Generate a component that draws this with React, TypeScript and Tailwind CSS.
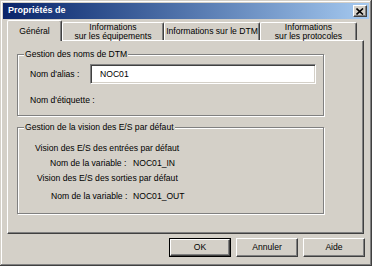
const font = "font-['Liberation_Sans',Arial,sans-serif]";

const raised =
  "border border-t-white border-l-white border-r-[#404040] border-b-[#404040] shadow-[inset_-1px_-1px_0_#808080]";

function GroupBox({ label, className, children }: { label: string; className?: string; children: React.ReactNode }) {
  return (
    <div
      className={`relative border border-[#808080] shadow-[inset_1px_1px_0_#fff,1px_1px_0_#fff] ${className ?? ""}`}
    >
      <span className="absolute -top-[7px] left-[6px] bg-[#d4d0c8] px-[1px] leading-[12px]">{label}</span>
      {children}
    </div>
  );
}

function Tab({ width, lines }: { width: string; lines: string[] }) {
  return (
    <div
      className={`${width} mt-[2px] h-[18px] rounded-t-[2px] border-t border-l border-r border-t-white border-l-white border-r-[#404040] shadow-[inset_-1px_0_0_#808080] flex flex-col items-center justify-center leading-[9px] text-center`}
    >
      {lines.map((l) => (
        <span key={l}>{l}</span>
      ))}
    </div>
  );
}

function Button({ label, isDefault }: { label: string; isDefault?: boolean }) {
  return (
    <div className={`w-[62px] h-[19px] ${isDefault ? "border border-black" : ""}`}>
      <div className={`w-full h-full flex items-center justify-center ${raised}`}>{label}</div>
    </div>
  );
}

export default function App() {
  return (
    <div
      className={`${font} w-[372px] h-[266px] bg-[#d4d0c8] text-black text-[8.6px] p-[3px] flex flex-col shadow-[inset_-1px_-1px_0_#404040,inset_1px_1px_0_#d4d0c8,inset_-2px_-2px_0_#808080,inset_2px_2px_0_#fff]`}
    >
      {/* title bar */}
      <div className="h-[16px] flex items-center justify-between bg-gradient-to-r from-[#0a246a] to-[#a6caf0] pl-[5px] pr-[2px]">
        <span className="text-white font-bold text-[9px]">Propriétés de</span>
        <div className={`w-[14px] h-[12px] bg-[#d4d0c8] flex items-center justify-center ${raised}`}>
          <svg width="8" height="7" viewBox="0 0 8 7">
            <path d="M0.5 0.5 L7 6.5 M7 0.5 L0.5 6.5" stroke="#000" strokeWidth="1.6" />
          </svg>
        </div>
      </div>

      {/* tabs */}
      <div className="relative z-10 mt-[1px] ml-[4px] h-[20px] flex items-start">
        <div className="w-[55px] h-[21px] bg-[#d4d0c8] rounded-t-[2px] border-t border-l border-r border-t-white border-l-white border-r-[#404040] shadow-[inset_-1px_0_0_#808080] flex items-center justify-center pt-[1px]">
          Général
        </div>
        <Tab width="w-[102px]" lines={["Informations", "sur les équipements"]} />
        <Tab width="w-[96px]" lines={["Informations sur le DTM"]} />
        <Tab width="w-[97px]" lines={["Informations", "sur les protocoles"]} />
      </div>

      {/* panel */}
      <div className={`ml-[4px] w-[357px] h-[194px] flex flex-col ${raised}`}>
        <GroupBox label="Gestion des noms de DTM" className="ml-[9px] mt-[13px] w-[307px] h-[62px]">
          <div className="mt-[9px] pl-[12px] h-[20px] flex items-center">
            <span className="w-[60px]">Nom d'alias :</span>
            <div className="w-[226px] h-[20px] bg-white flex items-center pl-[9px] border border-t-[#808080] border-l-[#808080] border-b-white border-r-white shadow-[inset_1px_1px_0_#404040,inset_-1px_-1px_0_#d4d0c8]">
              NOC01
            </div>
          </div>
          <div className="mt-[9px] pl-[12px] h-[14px] flex items-center">Nom d'étiquette :</div>
        </GroupBox>

        <GroupBox label="Gestion de la vision des E/S par défaut" className="ml-[9px] mt-[11px] w-[307px] h-[87px]">
          <div className="mt-[13px] pl-[17px] h-[14px] flex items-center">Vision des E/S des entrées par défaut</div>
          <div className="mt-[1px] pl-[32px] h-[14px] flex items-center">
            <span className="w-[83px]">Nom de la variable :</span>
            <span>NOC01_IN</span>
          </div>
          <div className="mt-[1px] pl-[19px] h-[14px] flex items-center">Vision des E/S des sorties par défaut</div>
          <div className="mt-[4px] pl-[33px] h-[14px] flex items-center">
            <span className="w-[82px]">Nom de la variable :</span>
            <span>NOC01_OUT</span>
          </div>
        </GroupBox>
      </div>

      {/* buttons */}
      <div className="mt-[4px] ml-[166px] flex gap-[5px]">
        <Button label="OK" isDefault />
        <Button label="Annuler" />
        <Button label="Aide" />
      </div>
    </div>
  );
}
